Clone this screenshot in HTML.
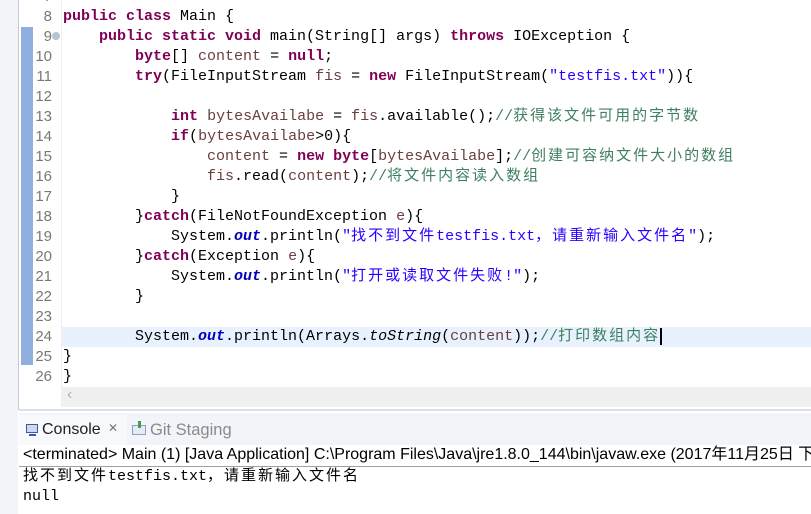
<!DOCTYPE html>
<html><head><meta charset="utf-8"><style>
body{margin:0;width:811px;height:514px;overflow:hidden;background:#fff;position:relative;font-family:"Liberation Mono","Noto Sans CJK SC",monospace}
.abs{position:absolute}
.row{position:absolute;left:0;height:20px;line-height:20px;font-size:15px;white-space:pre;color:#000}
.ln{position:absolute;left:20px;width:32px;text-align:right;height:20px;line-height:20px;font-size:15px;color:#787878;font-family:"Liberation Sans",sans-serif}
.k{color:#7f0055;font-weight:bold}.s{color:#2a00ff}.c{color:#3f7f5f}.v{color:#6a3e3e}.f{color:#0000c0;font-weight:bold;font-style:italic}.i{font-style:italic}
.cj{font-family:"Noto Sans CJK SC",sans-serif;letter-spacing:2px;line-height:0}
.ui{font-family:"Liberation Sans","Noto Sans CJK SC",sans-serif;font-size:15px}
</style></head><body>
<div class="abs" style="left:0;top:0;width:18px;height:514px;background:#f3f4f9"></div>
<div class="abs" style="left:18px;top:0;width:1px;height:410px;background:#c8cbd3"></div>
<div class="abs" style="left:19px;top:0;width:792px;height:409px;background:#fff"></div>
<div class="abs" style="left:61px;top:0;width:1px;height:387px;background:#eee"></div>
<div class="abs" style="left:21px;top:27px;width:12px;height:338px;background:#8fb0de"></div>
<div class="abs" style="left:62px;top:327px;width:749px;height:20px;background:#e8f2fe"></div>
<div class="abs" style="left:61px;top:387px;width:750px;height:20px;background:#f0f0f0"></div>
<div class="abs ui" style="left:67px;top:386px;color:#b0b0b0;font-size:16px">&lsaquo;</div>
<div class="abs" style="left:19px;top:409px;width:792px;height:2px;background:#d9dfea"></div>
<div class="abs" style="left:19px;top:413px;width:792px;height:32px;background:#f3f4f9"></div>
<div class="abs" style="left:19px;top:415px;width:108px;height:30px;background:#f8f9fc"></div>
<div class="abs" style="left:26px;top:424px;width:12px;height:9px;border:1.5px solid #3b5b9a;background:#cbd8ee;box-sizing:border-box"></div>
<div class="abs" style="left:29px;top:434px;width:7px;height:2px;background:#3b5b9a"></div>
<div class="abs ui" style="left:42px;top:421px;color:#222;font-size:16px">Console</div>
<div class="abs ui" style="left:108px;top:421px;color:#777;font-size:12px">✕</div>
<div class="abs" style="left:132px;top:425px;width:14px;height:10px;border:1px solid #8aa0c0;box-sizing:border-box;background:#e4ebf5"></div>
<div class="abs" style="left:138px;top:421px;width:3px;height:7px;background:#4a9a4a"></div>
<div class="abs ui" style="left:150px;top:421px;color:#8a8a8a;font-size:16.5px">Git Staging</div>
<div class="abs" style="left:19px;top:445px;width:792px;height:20px;background:#fff"></div>
<div class="abs ui" style="left:23px;top:445px;color:#000;white-space:pre;font-size:16px;line-height:20px">&lt;terminated&gt; Main (1) [Java Application] C:\Program Files\Java\jre1.8.0_144\bin\javaw.exe (2017<span style="line-height:0">年</span>11<span style="line-height:0">月</span>25<span style="line-height:0">日 下</span></div>
<div class="abs" style="left:19px;top:466px;width:792px;height:1px;background:#a0a0a0"></div>
<div class="row" style="left:23px;top:467px"><span class="cj">找不到文件</span>testfis.txt<span class="cj">，请重新输入文件名</span></div>
<div class="row" style="left:23px;top:487px">null</div>

<div class="ln" style="top:-13px">7</div>
<div class="ln" style="top:7px">8</div><div class="row" style="left:63px;top:7px"><span class="k">public class</span> Main {</div>
<div class="ln" style="top:27px">9</div><div class="abs" style="left:52px;top:32px;width:8px;height:8px;border-radius:50%;background:#b8c2d0"></div>
<div class="row" style="left:63px;top:27px">    <span class="k">public static void</span> main(String[] args) <span class="k">throws</span> IOException {</div>
<div class="ln" style="top:47px">10</div><div class="row" style="left:63px;top:47px">        <span class="k">byte</span>[] <span class="v">content</span> = <span class="k">null</span>;</div>
<div class="ln" style="top:67px">11</div><div class="row" style="left:63px;top:67px">        <span class="k">try</span>(FileInputStream <span class="v">fis</span> = <span class="k">new</span> FileInputStream(<span class="s">"testfis.txt"</span>)){</div>
<div class="ln" style="top:87px">12</div>
<div class="ln" style="top:107px">13</div><div class="row" style="left:63px;top:107px">            <span class="k">int</span> <span class="v">bytesAvailabe</span> = <span class="v">fis</span>.available();<span class="c">//<span class="cj">获得该文件可用的字节数</span></span></div>
<div class="ln" style="top:127px">14</div><div class="row" style="left:63px;top:127px">            <span class="k">if</span>(<span class="v">bytesAvailabe</span>&gt;0){</div>
<div class="ln" style="top:147px">15</div><div class="row" style="left:63px;top:147px">                <span class="v">content</span> = <span class="k">new byte</span>[<span class="v">bytesAvailabe</span>];<span class="c">//<span class="cj">创建可容纳文件大小的数组</span></span></div>
<div class="ln" style="top:167px">16</div><div class="row" style="left:63px;top:167px">                <span class="v">fis</span>.read(<span class="v">content</span>);<span class="c">//<span class="cj">将文件内容读入数组</span></span></div>
<div class="ln" style="top:187px">17</div><div class="row" style="left:63px;top:187px">            }</div>
<div class="ln" style="top:207px">18</div><div class="row" style="left:63px;top:207px">        }<span class="k">catch</span>(FileNotFoundException <span class="v">e</span>){</div>
<div class="ln" style="top:227px">19</div><div class="row" style="left:63px;top:227px">            System.<span class="f">out</span>.println(<span class="s">"<span class="cj">找不到文件</span>testfis.txt<span class="cj">，请重新输入文件名</span>"</span>);</div>
<div class="ln" style="top:247px">20</div><div class="row" style="left:63px;top:247px">        }<span class="k">catch</span>(Exception <span class="v">e</span>){</div>
<div class="ln" style="top:267px">21</div><div class="row" style="left:63px;top:267px">            System.<span class="f">out</span>.println(<span class="s">"<span class="cj">打开或读取文件失败</span>!"</span>);</div>
<div class="ln" style="top:287px">22</div><div class="row" style="left:63px;top:287px">        }</div>
<div class="ln" style="top:307px">23</div>
<div class="ln" style="top:327px">24</div><div class="row" style="left:63px;top:327px">        System.<span class="f">out</span>.println(Arrays.<span class="i">toString</span>(<span class="v">content</span>));<span class="c">//<span class="cj">打印数组内容</span></span><span style="display:inline-block;width:2px;height:17px;background:#000;vertical-align:middle"></span></div>
<div class="ln" style="top:347px">25</div><div class="row" style="left:63px;top:347px">}</div>
<div class="ln" style="top:367px">26</div><div class="row" style="left:63px;top:367px">}</div>
</body></html>
